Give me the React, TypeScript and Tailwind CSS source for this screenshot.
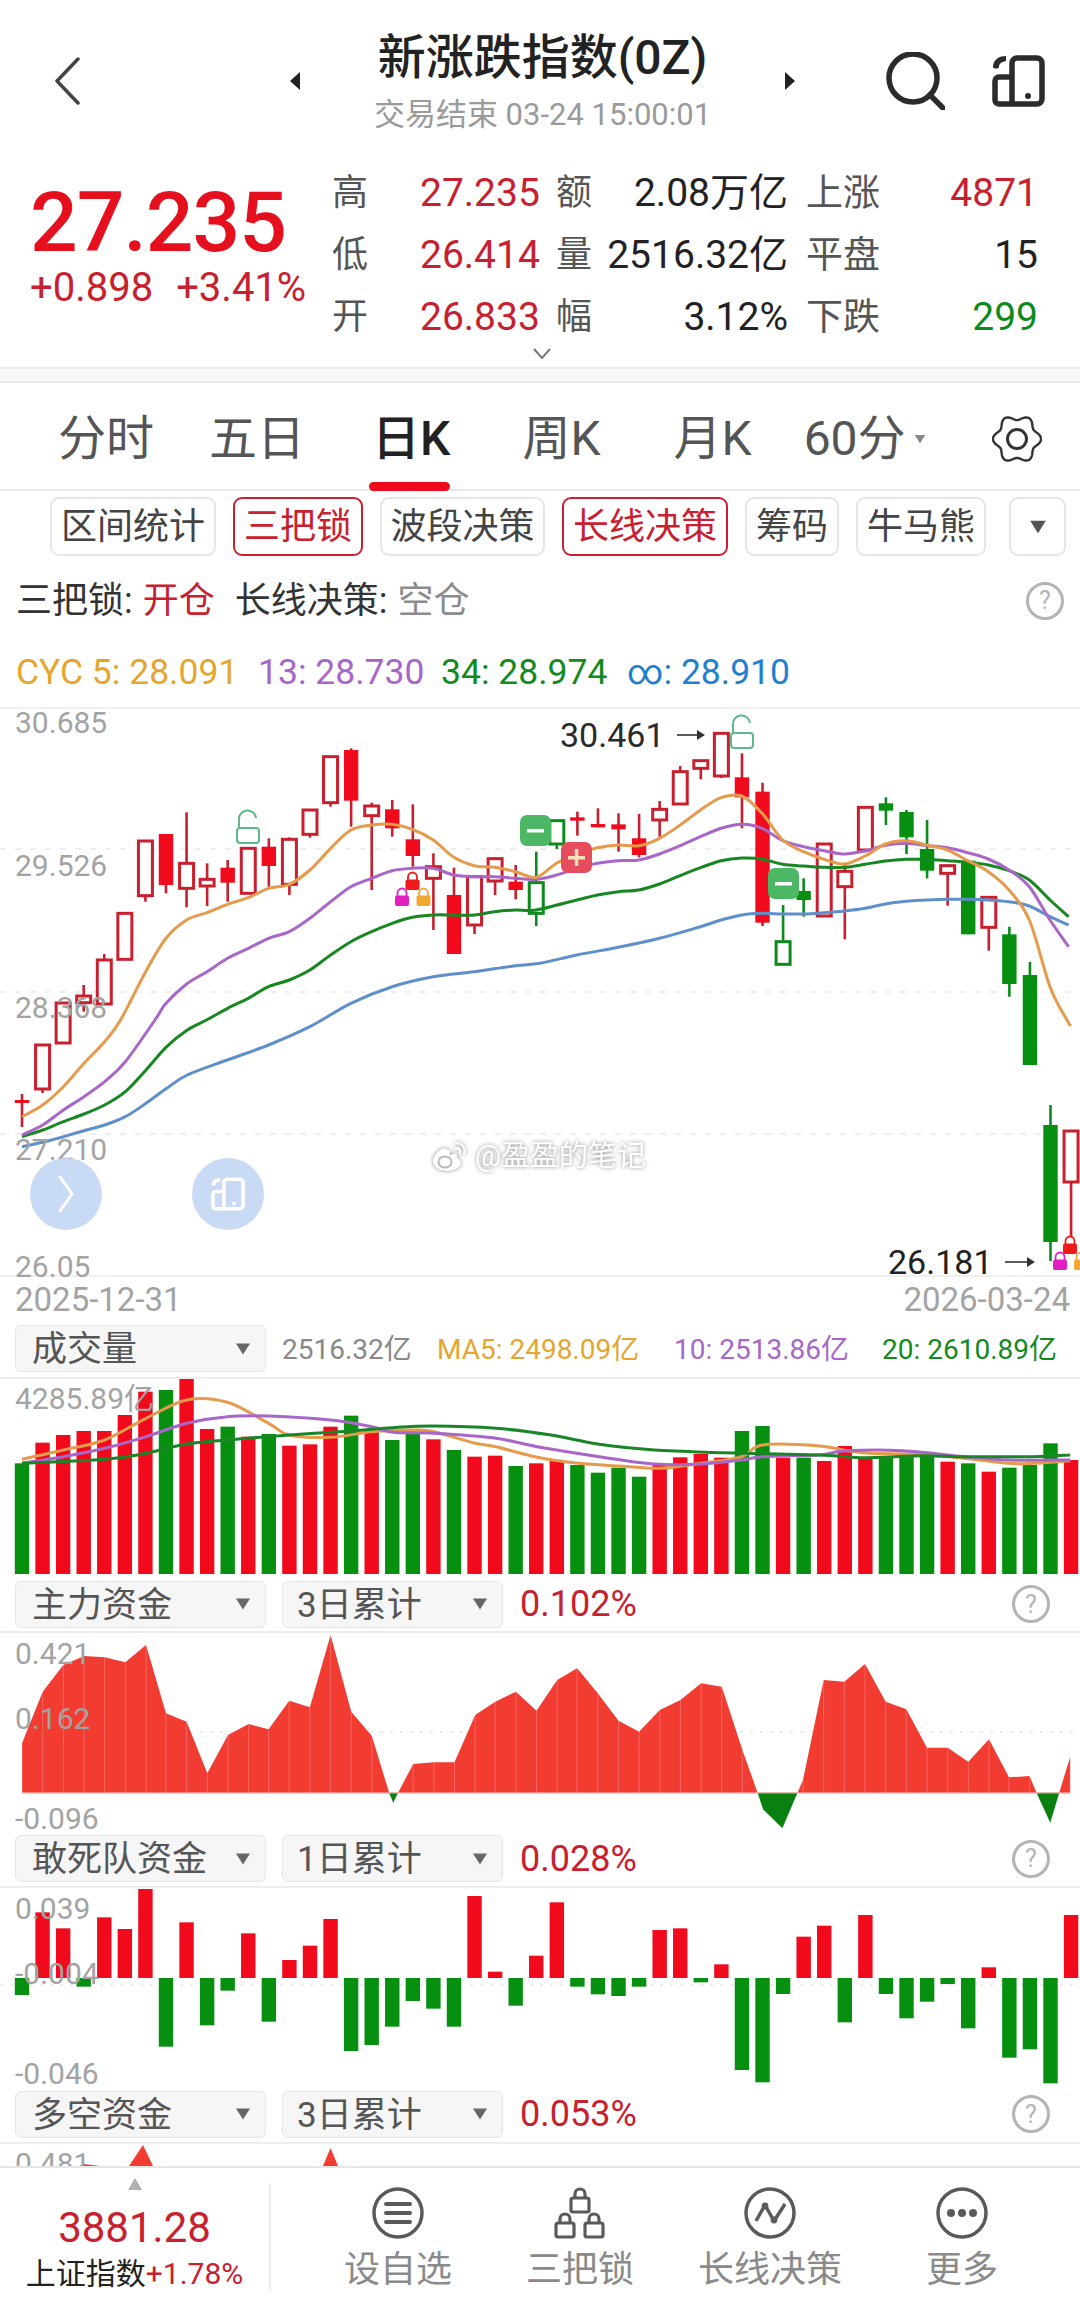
import React from "react";

type P = [number, number];
const z3 = (a: number[]): P[] => { const o: P[] = []; for (let i = 0; i < a.length; i += 2) o.push([a[i] / 2.904, 700 + a[i + 1] / 3]); return o; };
const z4 = (a: number[]): P[] => { const o: P[] = []; for (let i = 0; i < a.length; i += 2) o.push([540 + a[i] / 2.904, 700 + a[i + 1] / 3]); return o; };
const zw = (a: number[], oy: number): P[] => { const o: P[] = []; for (let i = 0; i < a.length; i += 2) o.push([a[i] / 1.452, oy + a[i + 1] / 3]); return o; };

const smooth = (p: P[]) => {
  let d = `M${p[0][0].toFixed(1)} ${p[0][1].toFixed(1)}`;
  for (let i = 0; i < p.length - 1; i++) {
    const a = p[Math.max(0, i - 1)], b = p[i], c = p[i + 1], e = p[Math.min(p.length - 1, i + 2)];
    d += `C${(b[0] + (c[0] - a[0]) / 6).toFixed(1)} ${(b[1] + (c[1] - a[1]) / 6).toFixed(1)} ${(c[0] - (e[0] - b[0]) / 6).toFixed(1)} ${(c[1] - (e[1] - b[1]) / 6).toFixed(1)} ${c[0].toFixed(1)} ${c[1].toFixed(1)}`;
  }
  return d;
};

const xOf = (i: number) => 22 + 20.57 * i;
const HR = "#c8202f", SR = "#f00a1c", HG = "#0c8a1c", SG = "#07900f";

type C = [number, string, number, number, number, number];
const zy = (v: number) => 700 + v / 3;
const cz: C[] = ([
  [3, "r", 855, 888, 908, 935], [4, "r", 762, 780, 912, 912], [5, "r", 640, 640, 778, 778], [6, "r", 423, 423, 587, 605],
  [7, "R", 402, 402, 555, 580], [8, "r", 337, 490, 565, 622], [9, "r", 490, 538, 558, 618], [10, "R", 480, 503, 548, 605],
  [11, "r", 445, 445, 580, 580], [12, "R", 415, 440, 498, 560], [13, "r", 412, 418, 553, 585], [14, "r", 330, 330, 403, 413],
  [15, "r", 170, 170, 308, 320], [16, "R", 145, 150, 302, 380], [17, "r", 308, 318, 347, 570], [18, "R", 300, 328, 385, 410],
  [19, "R", 313, 418, 468, 500], [20, "r", 460, 500, 535, 690], [21, "R", 503, 585, 762, 762], [22, "r", 530, 530, 675, 702],
  [23, "r", 472, 476, 543, 585], [24, "R", 495, 545, 570, 598], [25, "g", 455, 548, 640, 678], [26, "g", 362, 362, 432, 447],
  [27, "R", 335, 352, 362, 407], [28, "R", 325, 372, 382, 382], [29, "R", 340, 373, 388, 455], [30, "R", 342, 415, 465, 472],
  [31, "r", 303, 328, 360, 410], [32, "r", 198, 215, 312, 312], [33, "r", 182, 182, 205, 238], [34, "r", 100, 100, 228, 234],
  [35, "R", 160, 232, 292, 385], [36, "R", 248, 275, 668, 678], [37, "g", 615, 725, 793, 793], [38, "G", 535, 573, 600, 650],
  [39, "r", 432, 432, 648, 648], [40, "r", 495, 514, 560, 718], [41, "r", 322, 322, 450, 450], [42, "G", 292, 310, 332, 375],
  [43, "G", 330, 336, 412, 462], [44, "G", 360, 447, 512, 535], [45, "r", 497, 497, 520, 617], [46, "G", 482, 482, 703, 703],
  [47, "r", 592, 592, 682, 752], [48, "G", 680, 703, 852, 890],
] as C[]).map(([i, k, a, b, c, d]) => [i, k, zy(a), zy(b), zy(c), zy(d)] as C);
const candles: C[] = [
  [0, "R", 1094, 1100, 1103, 1127], [1, "r", 1045, 1045, 1089, 1093], [2, "r", 1003, 1003, 1043, 1043],
  ...cz, [49, "G", 962, 975, 1065, 1065], [50, "G", 1105, 1125, 1242, 1261], [51, "r", 1131, 1131, 1182, 1237],
];

const cyc = {
  orange: [...zw([32, 290, 62, 255, 92, 200, 122, 130, 152, 65, 175, 0], 1020), ...z3([423, 815, 482, 715, 542, 660, 601, 638, 661, 613, 721, 593, 780, 565, 840, 553, 900, 510, 960, 445, 1019, 390, 1079, 375, 1139, 373, 1198, 388, 1258, 420, 1318, 472, 1378, 497, 1437, 502, 1497, 515, 1557, 532]), ...z4([48, 490, 107, 462, 167, 443, 227, 435, 287, 437, 347, 415, 407, 375, 466, 330, 526, 293, 586, 288, 645, 340, 705, 420, 765, 455, 825, 478, 884, 492, 944, 468, 1003, 432, 1063, 422, 1123, 435, 1183, 450, 1242, 482, 1302, 515, 1362, 570, 1421, 660, 1481, 860, 1530, 960]), [1071, 1026] as P],
  purple: [...zw([32, 345, 62, 315, 92, 270, 122, 230, 152, 185, 182, 125, 225, 0], 1020), ...z3([482, 910, 542, 852, 601, 815, 661, 775, 721, 745, 780, 715, 840, 695, 900, 655, 960, 605, 1019, 560, 1079, 535, 1139, 512, 1198, 505, 1258, 505, 1318, 525, 1378, 530, 1437, 530, 1497, 535, 1557, 538]), ...z4([48, 525, 107, 505, 167, 490, 227, 482, 287, 480, 347, 462, 407, 437, 466, 410, 526, 385, 586, 373, 645, 385, 705, 422, 765, 440, 825, 452, 884, 462, 944, 453, 1003, 436, 1063, 430, 1123, 437, 1183, 443, 1242, 458, 1302, 477, 1362, 510, 1421, 560, 1481, 660, 1535, 740])],
  green: [...zw([32, 350, 62, 330, 92, 305, 122, 282, 152, 255, 182, 215, 212, 150, 242, 80, 272, 30, 300, 0], 1020), ...z3([661, 925, 721, 895, 780, 860, 840, 840, 900, 810, 960, 765, 1019, 725, 1079, 695, 1139, 670, 1198, 652, 1258, 645, 1318, 645, 1378, 645, 1437, 635, 1497, 630, 1557, 630]), ...z4([107, 600, 167, 585, 227, 575, 287, 570, 347, 552, 407, 527, 466, 503, 526, 482, 586, 474, 645, 477, 705, 493, 765, 498, 825, 502, 884, 502, 944, 493, 1003, 483, 1063, 478, 1123, 478, 1183, 482, 1242, 487, 1302, 495, 1362, 512, 1421, 540, 1481, 600, 1535, 650])],
  blue: [...zw([32, 380, 62, 367, 92, 350, 122, 332, 152, 315, 182, 290, 212, 250, 242, 205, 272, 165, 330, 120, 390, 75, 450, 20], 1020), ...z3([1019, 910, 1139, 860, 1258, 830, 1378, 815, 1497, 797]), ...z4([0, 790, 107, 765, 227, 742, 347, 715, 466, 680, 526, 660, 586, 645, 645, 640, 705, 642, 765, 642, 825, 638, 884, 633, 944, 625, 1003, 612, 1063, 604, 1123, 600, 1183, 598, 1242, 598, 1302, 600, 1362, 605, 1421, 618, 1481, 650, 1535, 675])],
};

const volTops: [string, number][] = [["G", 490], ["R", 428], ["R", 405], ["R", 393], ["R", 393], ["R", 345], ["R", 275], ["G", 270], ["R", 237], ["R", 387], ["G", 380], ["R", 410], ["G", 402], ["R", 437], ["R", 433], ["R", 380], ["G", 347], ["R", 395], ["G", 420], ["G", 395], ["R", 418], ["G", 450], ["R", 470], ["R", 467], ["G", 498], ["R", 490], ["R", 483], ["G", 495], ["G", 518], ["G", 503], ["G", 530], ["R", 495], ["R", 472], ["R", 462], ["R", 473], ["G", 393], ["G", 378], ["R", 473], ["G", 473], ["R", 483], ["R", 438], ["R", 473], ["G", 470], ["G", 470], ["G", 470], ["R", 485], ["G", 490], ["R", 515], ["G", 503], ["G", 495], ["G", 430], ["R", 480]];
const volLines: [string, number[]][] = [
  ["#e59a4c", [32, 478, 92, 450, 152, 420, 212, 355, 271, 300, 330, 307, 390, 370, 420, 405, 480, 412, 540, 395, 600, 390, 630, 395, 690, 430, 720, 440, 780, 472, 840, 490, 900, 498, 958, 505, 1018, 490, 1077, 470, 1107, 435, 1190, 438, 1250, 458, 1330, 463, 1400, 475, 1465, 490, 1500, 490, 1554, 482]],
  ["#a866c8", [32, 490, 92, 470, 152, 445, 212, 410, 271, 370, 330, 350, 390, 348, 480, 360, 540, 380, 570, 397, 630, 400, 720, 415, 780, 440, 870, 470, 950, 492, 1018, 492, 1077, 480, 1107, 470, 1190, 465, 1225, 453, 1310, 452, 1400, 470, 1465, 480, 1554, 480]],
  ["#1a8526", [32, 490, 152, 478, 212, 460, 271, 432, 330, 420, 420, 405, 510, 393, 570, 383, 630, 378, 720, 385, 800, 405, 870, 433, 950, 450, 1050, 458, 1190, 465, 1250, 473, 1340, 467, 1400, 470, 1500, 470, 1554, 465]],
];

const areaRed: number[][] = [
  [32, 578, 32, 430, 62, 275, 92, 195, 122, 168, 152, 172, 182, 187, 212, 135, 241, 340, 271, 365, 301, 520, 331, 405, 361, 372, 390, 388, 420, 302, 450, 322, 480, 105, 510, 335, 540, 408, 565, 578],
  [578, 578, 600, 492, 630, 487, 660, 487, 690, 345, 719, 305, 749, 275, 779, 332, 809, 240, 838, 205, 868, 280, 898, 362, 928, 395, 958, 330, 988, 300, 1018, 250, 1048, 260, 1078, 450, 1100, 578],
  [1158, 578, 1166, 540, 1196, 240, 1226, 245, 1256, 192, 1286, 305, 1316, 328, 1346, 443, 1376, 443, 1406, 485, 1436, 418, 1465, 532, 1495, 528, 1505, 578],
  [1538, 578, 1554, 470, 1554, 578],
];
const areaGreen: number[][] = [[565, 578, 571, 608, 578, 578], [1100, 578, 1108, 628, 1136, 685, 1158, 578], [1505, 578, 1525, 668, 1538, 578]];

const z7 = (v: number) => 1600 + v / 3;
const z8 = (v: number) => 1920 + v / 3;
const dareBars: [string, number][] = [["G", z8(225)], ["R", z7(937)], ["R", z7(985)], ["G", z8(200)], ["R", z7(952)], ["R", z7(987)], ["R", z7(867)], ["G", z8(380)], ["R", z7(967)], ["G", z8(316)], ["G", z8(212)], ["R", z7(1000)], ["G", z8(305)], ["R", z8(120)], ["R", z8(77)], ["R", z7(957)], ["G", z8(393)], ["G", z8(375)], ["G", z8(320)], ["G", z8(243)], ["G", z8(266)], ["G", z8(320)], ["R", z7(888)], ["R", z8(155)], ["G", z8(257)], ["R", z8(107)], ["R", z7(907)], ["G", z8(200)], ["G", z8(223)], ["G", z8(228)], ["G", z8(200)], ["R", z7(990)], ["R", z7(985)], ["G", z8(187)], ["R", z8(133)], ["G", z8(450)], ["G", z8(487)], ["G", z8(222)], ["R", z7(1010)], ["R", z7(977)], ["G", z8(307)], ["R", z7(945)], ["G", z8(222)], ["G", z8(295)], ["G", z8(245)], ["G", z8(192)], ["G", z8(325)], ["R", z8(142)], ["G", z8(413)], ["G", z8(388)], ["G", z8(490)], ["R", z7(945)]];

const Tri = ({ c = "#666", w = 16, h = 12 }: { c?: string; w?: number; h?: number }) => (
  <svg width={w} height={h} viewBox="0 0 16 12" className="shrink-0"><path d="M1 0.5H15L8 11.5Z" fill={c} /></svg>
);

const Help = () => (
  <div className="flex h-[38px] w-[38px] shrink-0 items-center justify-center rounded-full border-[3px] border-[#b4b4b4] text-[25px] leading-none text-[#b4b4b4]">?</div>
);

const Select = ({ label, cls }: { label: string; cls: string }) => (
  <div className={`flex h-[47px] items-center justify-between rounded-[6px] border border-[#e6e6e6] bg-[#f6f6f6] text-[35px] leading-none text-[#555] ${cls}`}>
    <span className="translate-y-[1px]">{label}</span>
    <Tri />
  </div>
);

const PanelHead = ({ name, span, value, h }: { name: string; span: string; value: string; h: string }) => (
  <div className={`flex items-center border-b-2 border-[#eeeeee] pl-[15px] pr-[30px] pt-[3px] ${h}`}>
    <Select label={name} cls="w-[251px] pl-[16px] pr-[14px]" />
    <Select label={span} cls="ml-[16px] w-[221px] pl-[14px] pr-[14px]" />
    <span className="ml-[17px] text-[36px] leading-none text-[#c8202f]">{value}</span>
    <div className="ml-auto"><Help /></div>
  </div>
);

const Lock = ({ x, y, c }: { x: number; y: number; c: string }) => (
  <g>
    <path d={`M${x - 4.5} ${y + 9}V${y + 5}a4.5 4.5 0 0 1 9 0V${y + 9}`} fill="none" stroke={c} strokeWidth="1.8" />
    <rect x={x - 7} y={y + 7.5} width="14" height="10.5" rx="2" fill={c} />
  </g>
);
const OpenLock = ({ x, y }: { x: number; y: number }) => (
  <g fill="none" stroke="#5cb98a" strokeWidth="2">
    <path d={`M${x + 2} ${y + 17}V${y + 9}a8.5 8.5 0 0 1 17 -2`} />
    <rect x={x} y={y + 17} width="22" height="15" rx="3" />
  </g>
);
const Badge = ({ x, y, plus }: { x: number; y: number; plus?: boolean }) => (
  <g>
    <rect x={x} y={y} width="31" height="31" rx="7" fill={plus ? "#e74c5e" : "#4cb866"} />
    <rect x={x + 7} y={y + 14} width="17" height="3.5" fill={plus ? "#f6e0b8" : "#fff"} />
    {plus && <rect x={x + 13.8} y={y + 7} width="3.5" height="17" fill="#f6e0b8" />}
  </g>
);
const Arrow = ({ x1, x2, y }: { x1: number; x2: number; y: number }) => (
  <g>
    <line x1={x1} y1={y} x2={x2 - 6} y2={y} stroke="#333" strokeWidth="1.6" />
    <path d={`M${x2 - 8} ${y - 5}L${x2} ${y}L${x2 - 8} ${y + 5}Z`} fill="#333" />
  </g>
);

const Axis = ({ x = 15, y, t }: { x?: number; y: number; t: string }) => (
  <text x={x} y={y} fontSize="30" fill="#a3a3a3" dominantBaseline="central">{t}</text>
);

const IconI0 = ({ w, h, c }: { w: number; h: number; c: string }) => (
  <svg width={w} height={h} viewBox="0 0 53 52" fill="none" stroke={c} strokeWidth="5.5" strokeLinejoin="round">
    <path d="M20 22H7a4 4 0 0 0-4 4V45a4 4 0 0 0 4 4H45a5 5 0 0 0 5-5V8a5 5 0 0 0-5-5H25a5 5 0 0 0-5 5V49" />
    <path d="M14 1C8 1 1 4 1 12C1 14 7 14 7 12C7 9 9 7 14 6Z" fill={c} stroke="none" />
    <circle cx="36" cy="41" r="3" fill={c} stroke="none" />
  </svg>
);

const gearPath = (() => {
  let d = "";
  for (let k = 0; k <= 120; k++) {
    const t = (k / 120) * Math.PI * 2;
    const r = 21.5 + 2.6 * Math.cos(6 * t);
    d += `${k ? "L" : "M"}${(25 + r * Math.cos(t)).toFixed(2)} ${(25 + r * Math.sin(t)).toFixed(2)}`;
  }
  return d + "Z";
})();

const Row = ({ a, av, b, bv, bc = "text-[#222]", c, cv, cc }: { a: string; av: string; b: string; bv: string; bc?: string; c: string; cv: string; cc: string }) => (
  <div className="flex h-[62px] items-center leading-none">
    <span className="w-[88px] text-[36px] text-[#555]">{a}</span>
    <span className="w-[136px] text-[39px] text-[#c8202f]">{av}</span>
    <span className="w-[36px] text-[36px] text-[#555]">{b}</span>
    <span className={`w-[196px] text-right text-[39px] ${bc}`}>{bv}</span>
    <span className="ml-[18px] w-[75px] whitespace-nowrap text-[37px] text-[#555]">{c}</span>
    <span className={`w-[157px] text-right text-[39px] ${cc}`}>{cv}</span>
  </div>
);

const NavIcon = ({ kind }: { kind: number }) => (
  <svg width="52" height="52" viewBox="0 0 52 52" fill="none" stroke="#5a5a5a" strokeWidth="3.5">
    {kind !== 1 && <circle cx="26" cy="26" r="24" />}
    {kind === 0 && <path d="M14 17H38M14 26H38M14 35H38" strokeWidth="4" strokeLinecap="round" />}
    {kind === 1 && (
      <g strokeWidth="3.2" strokeLinejoin="round">
        <rect x="17" y="11" width="18" height="14" rx="2" /><path d="M21 11V7a5 5 0 0 1 10 0V11" />
        <rect x="2" y="36" width="18" height="14" rx="2" /><path d="M6 36V32a5 5 0 0 1 10 0V36" />
        <rect x="31" y="36" width="18" height="14" rx="2" /><path d="M35 36V32a5 5 0 0 1 10 0V36" />
      </g>
    )}
    {kind === 2 && (
      <g>
        <path d="M12 34L21 18L30 34L41 17" strokeLinejoin="round" />
        <circle cx="21" cy="19" r="3.4" fill="#5a5a5a" stroke="none" /><circle cx="30" cy="33" r="3.4" fill="#5a5a5a" stroke="none" />
      </g>
    )}
    {kind === 3 && (
      <g fill="#5a5a5a" stroke="none"><circle cx="15" cy="26" r="4" /><circle cx="26" cy="26" r="4" /><circle cx="37" cy="26" r="4" /></g>
    )}
  </svg>
);

const Nav = ({ kind, label, cls }: { kind: number; label: string; cls: string }) => (
  <div className={`flex flex-col items-center pt-[19px] ${cls}`}>
    <NavIcon kind={kind} />
    <span className="mt-[9px] text-[36px] leading-[44px] text-[#8a8a8a]">{label}</span>
  </div>
);

const Chip = ({ cls = "", on, children }: { cls?: string; on?: boolean; children: React.ReactNode }) => (
  <div className={`flex h-[59px] items-center justify-center rounded-[9px] border-2 text-[36px] leading-none ${on ? "border-[#c8202f] text-[#c8202f]" : "border-[#e6e6e6] text-[#444]"} ${cls}`}>{children}</div>
);

export default function App() {
  return (
    <div className="h-[2308px] w-[1080px] overflow-hidden bg-white [font-family:Roboto,'Noto_Sans_CJK_SC',sans-serif]">
      {/* header */}
      <div className="flex h-[162px] items-center">
        <svg className="ml-[54px] shrink-0" width="26" height="48" viewBox="0 0 26 48" fill="none" stroke="#444" strokeWidth="3.5" strokeLinecap="round" strokeLinejoin="round"><path d="M24 2L3 24L24 46" /></svg>
        <svg className="ml-[209px] shrink-0" width="12" height="18" viewBox="0 0 12 18"><path d="M11 0V18L1 9Z" fill="#222" /></svg>
        <div className="flex w-[483px] flex-col items-center">
          <div className="whitespace-nowrap text-[48px] font-medium leading-[60px] text-[#222]">新涨跌指数(0Z)</div>
          <div className="mt-[7px] whitespace-nowrap text-[31px] leading-[40px] text-[#9a9a9a]">交易结束 03-24 15:00:01</div>
        </div>
        <svg className="shrink-0" width="12" height="18" viewBox="0 0 12 18"><path d="M1 0V18L11 9Z" fill="#222" /></svg>
        <svg className="ml-[90px] shrink-0" width="59" height="58" viewBox="0 0 59 58" fill="none" stroke="#2b2b2b" strokeWidth="5.5" strokeLinecap="round"><circle cx="27" cy="26" r="24" /><path d="M44 43L57 56" /></svg>
        <div className="ml-[47px] shrink-0"><IconI0 w={53} h={52} c="#2b2b2b" /></div>
      </div>

      {/* quote */}
      <div className="flex h-[205px]">
        <div className="w-[332px] pl-[30px] pt-[19px]">
          <div className="text-[84px] font-medium leading-[84px] tracking-[-1px] text-[#e60f1e]">27.235</div>
          <div className="flex gap-[23px] whitespace-nowrap text-[40px] leading-[46px] text-[#c8202f]"><span>+0.898</span><span>+3.41%</span></div>
        </div>
        <div>
          <Row a="高" av="27.235" b="额" bv="2.08万亿" c="上涨" cv="4871" cc="text-[#c8202f]" />
          <Row a="低" av="26.414" b="量" bv="2516.32亿" c="平盘" cv="15" cc="text-[#222]" />
          <Row a="开" av="26.833" b="幅" bv="3.12%" c="下跌" cv="299" cc="text-[#0c8a1c]" />
          <div className="pl-[201px]"><svg width="18" height="11" viewBox="0 0 18 11" fill="none" stroke="#777" strokeWidth="2"><path d="M1 1L9 10L17 1" /></svg></div>
        </div>
      </div>
      <div className="h-[16px] border-y-2 border-[#e9e9e9] bg-[#f8f8f8]" />

      {/* tabs */}
      <div className="flex h-[108px] items-center border-b-2 border-[#e9e9e9] pt-[5px] text-[48px] leading-none text-[#555]">
        <span className="ml-[58px]">分时</span>
        <span className="ml-[55px]">五日</span>
        <span className="relative ml-[67px] flex h-full items-center font-medium text-[#222]">日K<span className="absolute -left-[3px] bottom-[-2px] h-[9px] w-[81px] rounded-full bg-[#ee0a1c]" /></span>
        <span className="ml-[72px]">周K</span>
        <span className="ml-[73px]">月K</span>
        <span className="ml-[52px]">60分</span>
        <span className="ml-[8px]"><Tri c="#888" w={12} h={10} /></span>
        <svg className="ml-auto mr-[38px] shrink-0" width="50" height="50" viewBox="0 0 50 50" fill="none" stroke="#333" strokeWidth="2.4"><path d={gearPath} /><circle cx="25" cy="25" r="9.5" strokeWidth="3" /></svg>
      </div>

      {/* chips */}
      <div className="flex gap-[17px] pl-[50px] pt-[6px]">
        <Chip cls="w-[166px]">区间统计</Chip>
        <Chip cls="w-[130px]" on>三把锁</Chip>
        <Chip cls="w-[165px]">波段决策</Chip>
        <Chip cls="w-[166px]" on>长线决策</Chip>
        <Chip cls="w-[94px]">筹码</Chip>
        <Chip cls="w-[130px]">牛马熊</Chip>
        <Chip cls="ml-[6px] w-[57px]"><Tri c="#555" w={18} h={16} /></Chip>
      </div>

      {/* status */}
      <div className="flex h-[86px] items-center pl-[16px] pr-[16px] pt-[3px] text-[36px] leading-none text-[#333]">
        <span>三把锁:</span><span className="ml-[10px] text-[#c8202f]">开仓</span>
        <span className="ml-[20px]">长线决策:</span><span className="ml-[10px] text-[#8c8c8c]">空仓</span>
        <div className="ml-auto"><Help /></div>
      </div>
      <div className="flex h-[65px] items-start pl-[16px] pt-[10px] text-[35.5px] leading-[40px] whitespace-nowrap">
        <span className="w-[242px] text-[#e5a52e]">CYC 5: 28.091</span>
        <span className="w-[183px] text-[#a866c8]">13: 28.730</span>
        <span className="w-[186px] text-[#128a1e]">34: 28.974</span>
        <span className="text-[#1f7fd0]">∞: 28.910</span>
      </div>

      {/* main chart */}
      <div className="relative h-[570px] border-y-2 border-[#efefef]">
        <svg width="1080" height="566" viewBox="0 709 1080 566" className="block overflow-visible">
          {[849, 992, 1134].map((y) => <line key={y} x1="0" x2="1080" y1={y} y2={y} stroke="#e9e9e9" strokeWidth="1.5" strokeDasharray="6 9" />)}
          {candles.map(([i, k, wt, bt, bb, wb]) => {
            const x = xOf(i), hollow = k === "r" || k === "g";
            const red = k === "r" || k === "R";
            const wc = red ? HR : HG, fc = red ? (hollow ? HR : SR) : (hollow ? HG : SG);
            return (
              <g key={i}>
                <line x1={x} x2={x} y1={wt} y2={wb} stroke={wc} strokeWidth="2.6" />
                {hollow
                  ? <rect x={x - 7} y={bt} width="14" height={bb - bt} fill="#fff" stroke={fc} strokeWidth="3" />
                  : <rect x={x - 7.2} y={bt} width="14.4" height={Math.max(bb - bt, 3)} fill={fc} />}
              </g>
            );
          })}
          <path d={smooth(cyc.blue)} fill="none" stroke="#5f8fcb" strokeWidth="3" />
          <path d={smooth(cyc.green)} fill="none" stroke="#178722" strokeWidth="3" />
          <path d={smooth(cyc.purple)} fill="none" stroke="#a866c8" strokeWidth="3" />
          <path d={smooth(cyc.orange)} fill="none" stroke="#e59a4c" strokeWidth="3" />
          <Axis y={722} t="30.685" /><Axis y={865} t="29.526" /><Axis y={1007} t="28.368" /><Axis y={1149} t="27.210" /><Axis y={1266} t="26.05" />
          <text x="560" y="735" fontSize="34" fill="#2a2a2a" dominantBaseline="central">30.461</text>
          <Arrow x1={677} x2={705} y={735} />
          <text x="888" y="1262" fontSize="34" fill="#222" dominantBaseline="central">26.181</text>
          <Arrow x1={1005} x2={1035} y={1262} />
          <OpenLock x={237} y={811} /><OpenLock x={731} y={716} />
          <Lock x={412.5} y={872} c="#f01a1a" /><Lock x={402} y={888} c="#e01fc0" /><Lock x={423.5} y={888} c="#f0a832" />
          <Lock x={1070} y={1236} c="#f01a1a" /><Lock x={1060} y={1252} c="#e01fc0" /><Lock x={1081} y={1252} c="#f0a832" />
          <Badge x={520} y={815} /><Badge x={561} y={842} plus /><Badge x={768} y={868} />
        </svg>
        <div className="absolute left-[30px] top-[449px] flex h-[72px] w-[72px] items-center justify-center rounded-full bg-[#c9daf5]">
          <svg width="18" height="40" viewBox="0 0 18 40" fill="none" stroke="#fff" strokeWidth="3" strokeLinecap="round"><path d="M3 3L15 20L3 37" /></svg>
        </div>
        <div className="absolute left-[192px] top-[449px] flex h-[72px] w-[72px] items-center justify-center rounded-full bg-[#c9daf5]">
          <IconI0 w={34} h={34} c="#fff" />
        </div>
        <div className="absolute left-[432px] top-[431px] flex items-center gap-[7px] [filter:drop-shadow(0_0_2px_#8a8a8a)]">
          <svg width="36" height="32" viewBox="0 0 36 32" fill="none" stroke="#fff" strokeWidth="2">
            <path d="M15 8C7 8 1 16 1 21c0 6 7 10 14 10s14-4 14-8c0-4-4-5-4-5 1-4-2-5-5-4-2 1-3 1-2-1 1-3-1-4-3-3Z" fill="#fff" stroke="none" />
            <ellipse cx="13" cy="22" rx="6.5" ry="5.5" stroke="#bbb" />
            <path d="M24 3c6 0 10 5 8 11M24 8c3 0 5 2 4 5" strokeLinecap="round" />
          </svg>
          <span className="text-[29px] leading-none text-white">@盈盈的笔记</span>
        </div>
      </div>

      {/* dates */}
      <div className="flex h-[48px] justify-between pl-[15px] pr-[10px] pt-[3px] text-[33px] leading-[40px] text-[#a3a3a3]">
        <span>2025-12-31</span><span>2026-03-24</span>
      </div>

      {/* volume */}
      <div className="flex h-[54px] items-start border-b-2 border-[#eeeeee] pl-[15px] text-[28px] leading-[49px] whitespace-nowrap">
        <Select label="成交量" cls="w-[251px] pl-[16px] pr-[14px]" />
        <span className="ml-[16px] w-[155px] text-[#888]">2516.32亿</span>
        <span className="w-[237px] text-[#e5a52e]">MA5: 2498.09亿</span>
        <span className="w-[208px] text-[#a866c8]">10: 2513.86亿</span>
        <span className="text-[#128a1e]">20: 2610.89亿</span>
      </div>
      <svg width="1080" height="195" viewBox="0 1379 1080 195" className="block">
        {volTops.map(([k, t], i) => <rect key={i} x={xOf(i) - 7.2} y={1300 + t / 3} width="14.4" height={1574 - (1300 + t / 3)} fill={k === "R" ? SR : SG} />)}
        {volLines.map(([c, pts]) => <path key={c} d={smooth(zw(pts, 1300))} fill="none" stroke={c} strokeWidth="3" />)}
        <text x="15" y="1398" fontSize="30" fill="#a3a3a3" dominantBaseline="central">4285.89亿</text>
      </svg>

      {/* 主力资金 */}
      <PanelHead name="主力资金" span="3日累计" value="0.102%" h="h-[59px]" />
      <svg width="1080" height="195" viewBox="0 1633 1080 195" className="block overflow-visible">
        <line x1="190" x2="1080" y1="1732" y2="1732" stroke="#e6e6e6" strokeWidth="1.5" strokeDasharray="3 7" />
        {areaRed.map((a, n) => {
          const pts = zw(a, 1600);
          return (
            <g key={n}>
              <polygon points={pts.map((p) => p.join(",")).join(" ")} fill="#f23c32" />
              {pts.slice(1, -1).map((p, i) => <line key={i} x1={p[0]} x2={p[0]} y1={p[1]} y2={1793} stroke="#fff" strokeOpacity="0.22" strokeWidth="1" />)}
            </g>
          );
        })}
        {areaGreen.map((a, n) => <polygon key={n} points={zw(a, 1600).map((p) => p.join(",")).join(" ")} fill="#0a8010" />)}
        <line x1="22" x2="1070" y1="1793" y2="1793" stroke="#f4a09a" strokeWidth="1" />
        <Axis y={1653} t="0.421" /><Axis y={1718} t="0.162" /><Axis y={1818} t="-0.096" />
      </svg>

      {/* 敢死队资金 */}
      <PanelHead name="敢死队资金" span="1日累计" value="0.028%" h="h-[60px]" />
      <svg width="1080" height="195" viewBox="0 1888 1080 195" className="block overflow-visible">
        <line x1="0" x2="1080" y1="1985" y2="1985" stroke="#e6e6e6" strokeWidth="1.5" strokeDasharray="3 7" />
        {dareBars.map(([k, v], i) => <rect key={i} x={xOf(i) - 7.2} y={Math.min(v, 1978)} width="14.4" height={Math.abs(v - 1978)} fill={k === "R" ? SR : SG} />)}
        <Axis y={1908} t="0.039" /><Axis y={1973} t="-0.004" /><Axis y={2073} t="-0.046" />
      </svg>

      {/* 多空资金 */}
      <PanelHead name="多空资金" span="3日累计" value="0.053%" h="h-[61px]" />
      <svg width="1080" height="22" viewBox="0 2144 1080 22" className="block">
        <polygon points="143,2145 129,2166 153,2166" fill="#f23c32" />
        <polygon points="330.5,2148 323,2166 338,2166" fill="#f23c32" />
        <polygon points="79,2166 84,2164 100,2166" fill="#f23c32" />
        <Axis y={2163} t="0.481" />
      </svg>

      {/* bottom bar */}
      <div className="flex h-[142px] border-t-2 border-[#e6e6e6] bg-white">
        <div className="flex w-[269px] flex-col items-center">
          <svg className="mt-[10px]" width="14" height="12" viewBox="0 0 14 12"><path d="M7 0L14 12H0Z" fill="#b0b0b0" /></svg>
          <div className="mt-[13px] text-[42px] leading-[50px] text-[#c8202f]">3881.28</div>
          <div className="mt-[1px] whitespace-nowrap text-[30px] leading-[40px] text-[#222]">上证指数<span className="text-[#c8202f]">+1.78%</span></div>
        </div>
        <div className="mt-[15px] h-[108px] w-[2px] bg-[#efefef]" />
        <Nav kind={0} label="设自选" cls="ml-[35px] w-[184px]" />
        <Nav kind={1} label="三把锁" cls="w-[180px]" />
        <Nav kind={2} label="长线决策" cls="w-[200px]" />
        <Nav kind={3} label="更多" cls="w-[184px]" />
      </div>
    </div>
  );
}
